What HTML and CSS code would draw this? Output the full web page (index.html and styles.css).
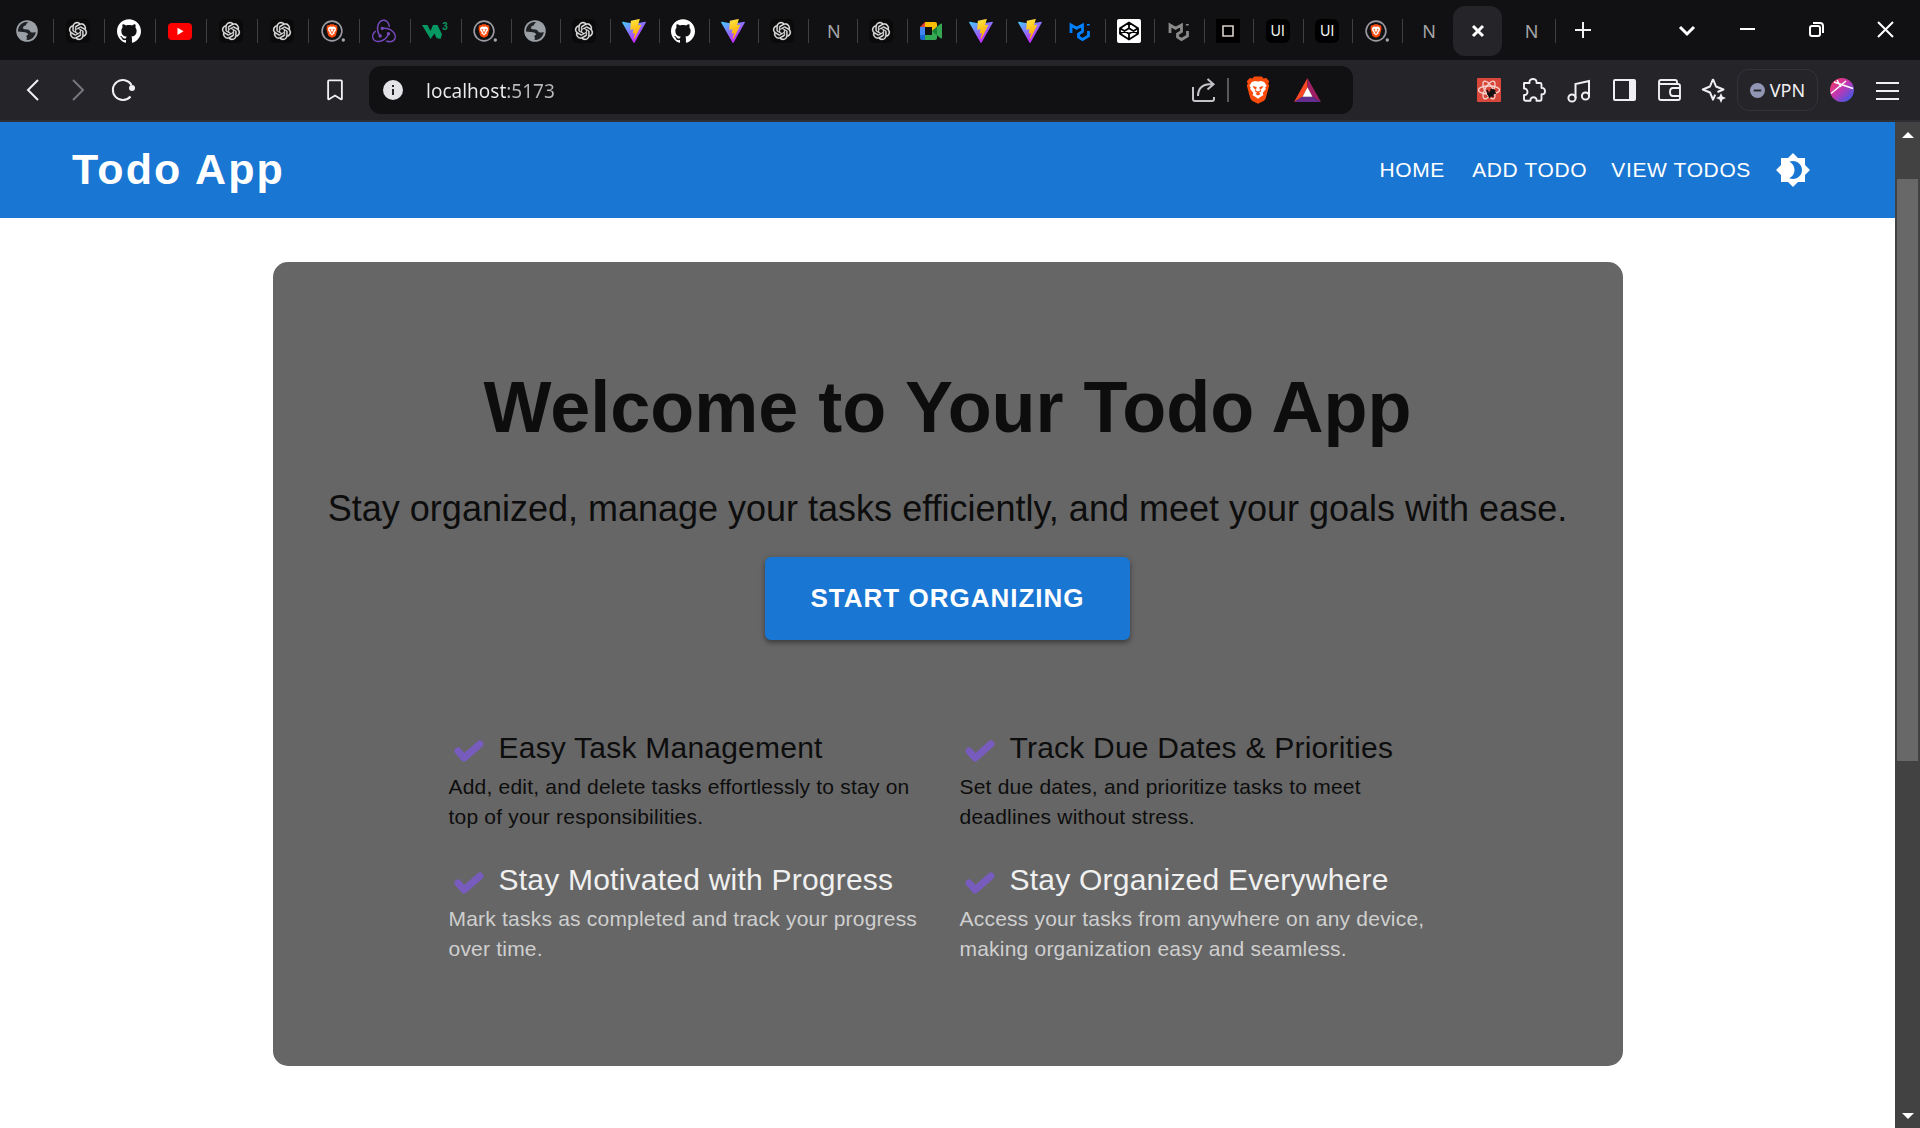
FILE: index.html
```html
<!DOCTYPE html>
<html lang="en">
<head>
<meta charset="utf-8">
<meta name="viewport" content="width=device-width, initial-scale=1">
<title>Todo App</title>
<link rel="stylesheet" href="styles.css">
</head>
<body>
<svg class="sprite" aria-hidden="true">
  <defs>
    <linearGradient id="vite-a" x1="0" y1="0" x2=".6" y2=".8"><stop offset="0" stop-color="#41d1ff"/><stop offset="1" stop-color="#bd34fe"/></linearGradient>
    <linearGradient id="vite-b" x1=".4" y1="0" x2=".6" y2=".9"><stop offset="0" stop-color="#ffea83"/><stop offset=".1" stop-color="#ffdd35"/><stop offset="1" stop-color="#ffa800"/></linearGradient>
    <linearGradient id="orb" x1=".1" y1=".1" x2=".9" y2=".9"><stop offset="0" stop-color="#f0386b"/><stop offset=".45" stop-color="#c436b0"/><stop offset="1" stop-color="#3c5ae8"/></linearGradient>
  </defs>
  <symbol id="i-globe" viewBox="0 0 24 24"><circle cx="12" cy="12" r="10.8" fill="#9aa0a6"/><path d="M13.5 3.2c-1.900 1-2.600 2-2.600 3.300-2.400.3-3.100 1.300-2.700 3.200 1.500.9 3.500.3 5.300 1 1.600.8 1.500 2.600 3.600 2.800 1.300.1 2.500-.6 3.700-.2-.6 3.700-3.500 7-7.300 7.600l-2.200-.1c.9-1.500.9-2.500-.2-3.800l2.200-1.500c-1.200-2-3.300-2.600-5.600-2.500l-4.700-.6c-.1-4.600 3.200-8.500 7.300-9.300z" fill="#202124"/><path d="M14 3.500l-1 3 3.500 1.300 2.500-2-1-1z" fill="#9aa0a6"/></symbol>
  <symbol id="i-gpt" viewBox="0 0 24 24"><rect width="24" height="24" rx="5" fill="#0a0a0b"/><path transform="translate(3 3) scale(.75)" fill="#e8e8e8" stroke="#e8e8e8" stroke-width=".4" d="M22.2819 9.8211a5.9847 5.9847 0 0 0-.5157-4.9108 6.0462 6.0462 0 0 0-6.5098-2.9A6.0651 6.0651 0 0 0 4.9807 4.1818a5.9847 5.9847 0 0 0-3.9977 2.9 6.0462 6.0462 0 0 0 .7427 7.0966 5.98 5.98 0 0 0 .511 4.9107 6.051 6.051 0 0 0 6.5146 2.9001A5.9847 5.9847 0 0 0 13.2599 24a6.0557 6.0557 0 0 0 5.7718-4.2058 5.9894 5.9894 0 0 0 3.9977-2.9001 6.0557 6.0557 0 0 0-.7475-7.0729zm-9.022 12.6081a4.4755 4.4755 0 0 1-2.8764-1.0408l.1419-.0804 4.7783-2.7582a.7948.7948 0 0 0 .3927-.6813v-6.7369l2.02 1.1686a.071.071 0 0 1 .038.052v5.5826a4.504 4.504 0 0 1-4.4945 4.4944zm-9.6607-4.1254a4.4708 4.4708 0 0 1-.5346-3.0137l.142.0852 4.783 2.7582a.7712.7712 0 0 0 .7806 0l5.8428-3.3685v2.3324a.0804.0804 0 0 1-.0332.0615L9.74 19.9502a4.4992 4.4992 0 0 1-6.1408-1.6464zM2.3408 7.8956a4.485 4.485 0 0 1 2.3655-1.9728V11.6a.7664.7664 0 0 0 .3879.6765l5.8144 3.3543-2.0201 1.1685a.0757.0757 0 0 1-.071 0l-4.8303-2.7865A4.504 4.504 0 0 1 2.3408 7.872zm16.5963 3.8558L13.1038 8.364 15.1192 7.2a.0757.0757 0 0 1 .071 0l4.8303 2.7913a4.4944 4.4944 0 0 1-.6765 8.1042v-5.6772a.79.79 0 0 0-.407-.667zm2.0107-3.0231l-.142-.0852-4.7735-2.7818a.7759.7759 0 0 0-.7854 0L9.409 9.2297V6.8974a.0662.0662 0 0 1 .0284-.0615l4.8303-2.7866a4.4992 4.4992 0 0 1 6.6802 4.66zM8.3065 12.863l-2.02-1.1638a.0804.0804 0 0 1-.038-.0567V6.0742a4.4992 4.4992 0 0 1 7.3757-3.4537l-.142.0805L8.704 5.459a.7948.7948 0 0 0-.3927.6813zm1.0976-2.3654l2.602-1.4998 2.6069 1.4998v2.9994l-2.5974 1.4997-2.6067-1.4997Z"/></symbol>
  <symbol id="i-github" viewBox="0 0 24 24"><path fill="#fff" d="M12 .297c-6.63 0-12 5.373-12 12 0 5.303 3.438 9.8 8.205 11.385.6.113.82-.258.82-.577 0-.285-.01-1.04-.015-2.04-3.338.724-4.042-1.61-4.042-1.61C4.422 18.07 3.633 17.7 3.633 17.7c-1.087-.744.084-.729.084-.729 1.205.084 1.838 1.236 1.838 1.236 1.07 1.835 2.809 1.305 3.495.998.108-.776.417-1.305.76-1.605-2.665-.3-5.466-1.332-5.466-5.93 0-1.31.465-2.38 1.235-3.22-.135-.303-.54-1.523.105-3.176 0 0 1.005-.322 3.3 1.23.96-.267 1.98-.399 3-.405 1.02.006 2.04.138 3 .405 2.28-1.552 3.285-1.23 3.285-1.23.645 1.653.24 2.873.12 3.176.765.84 1.23 1.91 1.23 3.22 0 4.61-2.805 5.625-5.475 5.92.42.36.81 1.096.81 2.22 0 1.606-.015 2.896-.015 3.286 0 .315.21.69.825.57C20.565 22.092 24 17.592 24 12.297c0-6.627-5.373-12-12-12"/></symbol>
  <symbol id="i-youtube" viewBox="0 0 24 24"><rect y="4" width="24" height="17" rx="4" fill="#f00"/><path d="M9.500 8.700v7.200l6-3.600z" fill="#fff"/></symbol>
  <symbol id="i-lion" viewBox="0 0 24 28"><path d="M17.500 2.500 15.800.4H8.200L6.500 2.500 3.800 2 .8 5.300l1 2.500-1 1.700 3.300 12.300c.4 1.400 1.200 2.300 2.300 3.100L12 27.700l5.600-2.800c1.100-.8 1.900-1.700 2.300-3.100L23.200 9.500l-1-1.700 1-2.500-3-3.300z" fill="#fb4b0b"/><path d="M12 5.500 9 5 5.800 6 3.400 9.700l1.200 1.600-.4 1.800 3 3.600-.5 2.500 2.600 1.500L12 22.800l2.700-2.100 2.600-1.500-.5-2.500 3-3.600-.4-1.800 1.200-1.600L18.200 6 15 5z" fill="#fff"/><path d="M6.500 10l4.200 1-.8 3.600 2.100.9 2.100-.9-.8-3.600 4.200-1-1.700 2.800-1.300.1.500 2.500-2 1.200 1.500 1.500L12 19.500l-2.500-1.400L11 16.600l-2-1.200.5-2.500-1.300-.1z" fill="#fb4b0b"/></symbol>
  <symbol id="i-brave" viewBox="0 0 24 24"><circle cx="11" cy="12" r="9.900" fill="none" stroke="#9b9ba3" stroke-width="1.600"/><use href="#i-lion" x="5" y="5" width="12" height="14"/><circle cx="22.300" cy="21" r="1.700" fill="#a5a5ad"/></symbol>
  <symbol id="i-redux" viewBox="0 0 24 24"><path fill="#764abc" d="M16.634 16.504c.87-.075 1.543-.84 1.5-1.754-.047-.914-.796-1.648-1.709-1.648h-.061a1.71 1.71 0 00-1.648 1.769c.03.479.226.869.494 1.153-1.048 2.038-2.621 3.535-5.005 4.795-1.603.838-3.296 1.154-4.944.929-1.378-.194-2.456-.81-3.116-1.799-.988-1.499-1.078-3.116-.255-4.734.601-1.166 1.499-2.023 2.099-2.443a9.96 9.96 0 01-.42-1.543C-.868 14.408-.416 18.752.932 20.805c1.004 1.498 3.057 2.456 5.304 2.456.599 0 1.23-.044 1.843-.194 3.897-.749 6.848-3.086 8.541-6.532zm5.348-3.746c-2.32-2.728-5.738-4.226-9.634-4.226h-.51c-.253-.554-.837-.899-1.498-.899h-.045c-.943 0-1.678.81-1.647 1.753.03.898.794 1.648 1.708 1.648h.074a1.69 1.69 0 001.499-1.049h.555c2.309 0 4.495.674 6.488 1.992 1.527 1.005 2.622 2.323 3.237 3.896.538 1.288.509 2.547-.045 3.597-.855 1.647-2.294 2.517-4.196 2.517-1.199 0-2.367-.375-2.967-.644-.36.298-.96.793-1.394 1.093 1.318.598 2.652.943 3.94.943 2.922 0 5.093-1.647 5.918-3.236.898-1.798.824-4.824-1.47-7.416zM6.49 17.042c.03.899.793 1.648 1.708 1.648h.06a1.688 1.688 0 001.648-1.768c0-.9-.779-1.647-1.693-1.647h-.06c-.06 0-.149 0-.226.029-1.243-2.098-1.768-4.347-1.572-6.772.12-1.828.72-3.417 1.797-4.735.899-1.124 2.593-1.68 3.746-1.708 3.236-.061 4.585 3.971 4.689 5.574l1.498.45c-.345-4.914-3.4-7.492-6.322-7.492-2.742 0-5.273 1.993-6.293 4.915-1.398 3.896-.479 7.643 1.229 10.638-.149.195-.239.554-.209.868z"/></symbol>
  <symbol id="i-vite" viewBox="0 0 256 257"><path fill="url(#vite-a)" d="M255.153 37.938L134.897 252.976c-2.483 4.44-8.862 4.466-11.382.048L.875 37.958c-2.746-4.814 1.371-10.646 6.827-9.67l120.385 21.517a6.537 6.537 0 0 0 2.322-.004l117.867-21.483c5.438-.991 9.574 4.796 6.877 9.62Z"/><path fill="url(#vite-b)" d="M185.432.063L96.44 17.501a3.268 3.268 0 0 0-2.634 3.014l-5.474 92.456a3.268 3.268 0 0 0 3.997 3.378l24.777-5.718c2.318-.535 4.413 1.507 3.936 3.838l-7.361 36.047c-.495 2.426 1.782 4.5 4.151 3.78l15.304-4.649c2.372-.72 4.652 1.36 4.15 3.788l-11.698 56.621c-.732 3.542 3.979 5.473 5.943 2.437l1.313-2.028l72.516-144.72c1.215-2.423-.88-5.186-3.54-4.672l-25.505 4.922c-2.396.462-4.435-1.77-3.759-4.114l16.646-57.705c.677-2.35-1.37-4.583-3.769-4.113Z"/></symbol>
  <symbol id="i-meet" viewBox="0 0 24 24"><path d="M1 8l5-5v5z" fill="#ea4335"/><path d="M1 8h5v8H1z" fill="#4285f4"/><path d="M1 16h5v5H3q-2 0-2-2z" fill="#1967d2"/><path d="M6 3h10q2 0 2 2v7l-5 1V8H6z" fill="#fbbc04"/><path d="M6 16h7v-4l5-2v9q0 2-2 2H6z" fill="#34a853"/><path d="M13 12l8.500-7.200q1.500-.8 1.500.7v13q0 1.500-1.500.7z" fill="#34a853"/><path d="M13 12l5-4.300v8.600z" fill="#188038"/></symbol>
  <symbol id="i-mui" viewBox="0 0 24 24"><path d="M3 14V6l5.500 3.300L14.500 6v6.500l-4 2.500v3l4 2.500 6-3.500v-5M20.300 6.500v-1.500" fill="none" stroke="currentColor" stroke-width="2.800"/></symbol>
  <symbol id="i-codepen" viewBox="0 0 24 24"><rect width="24" height="24" rx="2" fill="#fff"/><path d="M12 3.500l9 5.700v5.600l-9 5.700-9-5.700V9.200zM12 3.500v5.700m0 5.600v5.700M3 9.200l9 5.600 9-5.600M3 14.800l9-5.600 9 5.600" fill="none" stroke="#000" stroke-width="1.800" stroke-linejoin="round"/></symbol>
  <symbol id="i-square" viewBox="0 0 24 24"><path d="M0 0h24v24H0z" fill="#000"/><path d="M7 7h10v10H7z" fill="none" stroke="#d6d0c8" stroke-width="1.600"/></symbol>
</svg>

<header class="browser">
  <div class="tabs">
    <div class="tabs-wide">
      <span class="tab"><svg><use href="#i-globe"/></svg></span>
      <span class="tab"><svg><use href="#i-gpt"/></svg></span>
      <span class="tab"><svg><use href="#i-github"/></svg></span>
      <span class="tab"><svg><use href="#i-youtube"/></svg></span>
      <span class="tab"><svg><use href="#i-gpt"/></svg></span>
      <span class="tab"><svg><use href="#i-gpt"/></svg></span>
      <span class="tab"><svg><use href="#i-brave"/></svg></span>
      <span class="tab"><svg><use href="#i-redux"/></svg></span>
      <span class="tab schools"><svg viewBox="0 0 20 24"><path d="M0 6h5.500l3 6 2.500-6h4.500l4.500 9.500-1.500 4.500-4-1-2-4.500-4 5.500z" fill="#059862"/></svg><sup>3</sup></span>
    </div>
    <div class="tabs-narrow">
      <span class="tab"><svg><use href="#i-brave"/></svg></span>
      <span class="tab"><svg><use href="#i-globe"/></svg></span>
      <span class="tab"><svg><use href="#i-gpt"/></svg></span>
      <span class="tab"><svg><use href="#i-vite"/></svg></span>
      <span class="tab"><svg><use href="#i-github"/></svg></span>
      <span class="tab"><svg><use href="#i-vite"/></svg></span>
      <span class="tab"><svg><use href="#i-gpt"/></svg></span>
      <span class="tab tab-letter">N</span>
      <span class="tab"><svg><use href="#i-gpt"/></svg></span>
      <span class="tab"><svg><use href="#i-meet"/></svg></span>
      <span class="tab"><svg><use href="#i-vite"/></svg></span>
      <span class="tab"><svg><use href="#i-vite"/></svg></span>
      <span class="tab mui-blue"><svg><use href="#i-mui"/></svg></span>
      <span class="tab"><svg><use href="#i-codepen"/></svg></span>
      <span class="tab mui-grey"><svg><use href="#i-mui"/></svg></span>
      <span class="tab"><svg><use href="#i-square"/></svg></span>
      <span class="tab"><span class="ui-badge">UI</span></span>
      <span class="tab"><span class="ui-badge">UI</span></span>
      <span class="tab"><svg><use href="#i-brave"/></svg></span>
    </div>
    <span class="tab tab-letter tab-open">N</span>
    <button class="tab-active" aria-label="Close tab"><svg viewBox="0 0 24 24"><path d="M7 7l10 10M17 7L7 17" stroke-width="3"/></svg></button>
    <span class="tab tab-letter tab-last">N</span>
    <button class="new-tab" aria-label="New tab"><svg viewBox="0 0 24 24"><path d="M12 4v16M4 12h16" stroke-width="2"/></svg></button>
    <div class="window-controls">
      <button aria-label="Search tabs"><svg viewBox="0 0 24 24"><path d="M5 9l7 7 7-7" stroke-width="3"/></svg></button>
      <button aria-label="Minimize"><svg viewBox="0 0 24 24"><path d="M4 11h15" stroke-width="2"/></svg></button>
      <button aria-label="Restore"><svg viewBox="0 0 24 24"><rect x="5" y="8" width="10" height="10" rx="2" stroke-width="2"/><path d="M8 5h7q3 0 3 3v7" stroke-width="2"/></svg></button>
      <button aria-label="Close"><svg viewBox="0 0 24 24"><path d="M4 4l15 15M19 4L4 19" stroke-width="2"/></svg></button>
    </div>
  </div>

  <div class="toolbar">
    <div class="toolbar-left">
      <button aria-label="Back"><svg viewBox="0 0 24 24"><path d="M17 2L7 12l10 10" stroke-width="2"/></svg></button>
      <button class="muted" aria-label="Forward"><svg viewBox="0 0 24 24"><path d="M7 2l10 10L7 22" stroke-width="2"/></svg></button>
      <button aria-label="Reload"><svg viewBox="0 0 24 24"><path d="M19.500 18.500A10 10 0 1 1 20.500 7" stroke-width="2"/><circle cx="21" cy="10" r="3" fill="currentColor" stroke="none"/></svg></button>
      <button class="bookmark" aria-label="Bookmark"><svg viewBox="0 0 24 24"><path d="M4.500 2.500q0-1 1-1h13q1 0 1 1v19q0 1-1 .5L12 18l-6.500 4q-1 .5-1-.5z" stroke-width="2"/></svg></button>
    </div>
    <div class="address">
      <svg class="info" viewBox="0 0 20 20"><circle cx="10" cy="10" r="10" fill="#e4e3e8"/><path d="M9 5h2v2H9zM9 9h2v6H9z" fill="#252429"/></svg>
      <input class="url" type="text" aria-label="Address" value="localhost:5173">
      <button class="share" aria-label="Share"><svg viewBox="0 0 24 24"><path d="M2 9v12q0 2 2 2h17q2 0 2-2v-2M7 18q0-12 14-12M16.500 1l6 5.200-6 5.300" stroke-width="2"/></svg></button>
      <span class="divider"></span>
      <button class="shield" aria-label="Brave Shields"><svg class="lion"><use href="#i-lion"/></svg></button>
      <button aria-label="Brave Rewards"><svg class="bat" viewBox="0 0 27 24"><path d="M13.500 0L0 24l8.500-5.200 5-9.500z" fill="#ff4724"/><path d="M13.500 0L27 24l-8.500-5.200-5-9.500z" fill="#9e1f63"/><path d="M0 24h27l-8.500-5.200h-10z" fill="#662d91"/><path d="M13.500 9.300l5 9.500h-10z" fill="#fff"/></svg></button>
    </div>
    <div class="toolbar-right">
      <button aria-label="React extension"><svg viewBox="0 0 24 24"><rect width="24" height="24" rx="1" fill="#d9463a" stroke="none"/><g stroke="#f7d5cf" stroke-width="1.300"><ellipse cx="12" cy="12" rx="10.500" ry="4"/><ellipse cx="12" cy="12" rx="10" ry="4" transform="rotate(60 12 12)"/><ellipse cx="12" cy="12" rx="10" ry="4" transform="rotate(120 12 12)"/></g><path d="M10 12l3 8M14 11l2 8M18 12l-3 6M10 16l9-1" stroke="#111" stroke-width="1.600"/><ellipse cx="14.500" cy="15" rx="2.500" ry="4.500" fill="#111" stroke="none" transform="rotate(35 14.500 15)"/></svg></button>
      <button aria-label="Extensions"><svg viewBox="0 0 24 24"><path d="M2 5h5.500C7 1.800 9.500 1 11 1s4 .8 3.500 4H18q1.500 0 1.500 1.500V10c2.500-.5 3.500 1.500 3.500 3.200s-1 3.600-3.500 3.100V21q0 1.800-1.500 1.800h-3.500c.4-3-1.500-3.500-3-3.500s-3.300.6-3 3.500H4Q2 22.800 2 21v-4c2.500.3 3.500-1.500 3.500-3.300S4 10.200 2 10.500z" stroke-width="1.900" stroke-linejoin="round"/></svg></button>
      <button aria-label="Playlist"><svg viewBox="0 0 24 24"><circle cx="5" cy="20" r="3.600" stroke-width="2"/><circle cx="18.500" cy="18" r="3.600" stroke-width="2"/><path d="M8.500 20V6L22 3v15" stroke-width="2"/></svg></button>
      <button aria-label="Sidebar"><svg viewBox="0 0 24 24"><rect x="2" y="2" width="21" height="20" rx="1" stroke-width="2"/><path d="M17 2h6v20h-6z" fill="currentColor" stroke="none"/></svg></button>
      <button aria-label="Wallet"><svg viewBox="0 0 24 24"><path d="M2 4q0-2 2-2h14q2 0 2 2v2M2 4v16q0 2 2 2h17q2 0 2-2V8q0-2-2-2H4Q2 6 2 4zM23 10h-7q-3 0-3 4t3 4h7" stroke-width="1.900"/></svg></button>
      <button aria-label="Leo AI"><svg viewBox="0 0 24 24"><path d="M11 1l3 7.500 7.500 3-6 2.500M11 1L8 8.500.8 11.500 8 14.500l3 7.200 2.200-5" stroke-width="2" stroke-linejoin="round"/><path d="M19 15l1.500 3.500L24 20l-3.500 1.500L19 25l-1.500-3.500L14 20l3.500-1.500z" fill="currentColor" stroke="none"/></svg></button>
      <button class="vpn"><svg viewBox="0 0 16 16"><circle cx="8" cy="8" r="8" fill="#9096b4" stroke="none"/><path d="M4 8h8" stroke="#252429" stroke-width="2"/></svg>VPN</button>
      <button aria-label="Profile"><svg viewBox="0 0 24 24"><circle cx="12" cy="12" r="12" fill="url(#orb)" stroke="none"/><path d="M4 4l19 6.500M1 15.500L16 3M11 9L7 2" stroke="#fff" stroke-width="1.500"/></svg></button>
      <button aria-label="Menu"><svg viewBox="0 0 24 24"><path d="M1 5h23M1 13h23M1 21h23" stroke-width="2"/></svg></button>
    </div>
  </div>
</header>

<div class="viewport">
  <div class="page">
    <header class="appbar">
      <h2 class="brand">Todo App</h2>
      <nav class="nav">
        <a href="#home">HOME</a>
        <a href="#add">ADD TODO</a>
        <a href="#todos">VIEW TODOS</a>
        <button class="theme" aria-label="Toggle theme"><svg viewBox="0 0 24 24"><path d="M20 8.690V4h-4.690L12 .69 8.690 4H4v4.690L.69 12 4 15.310V20h4.690L12 23.310 15.310 20H20v-4.690L23.310 12 20 8.690zM12 18c-.89 0-1.740-.2-2.500-.55C11.560 16.500 13 14.420 13 12s-1.440-4.500-3.500-5.450C10.260 6.200 11.110 6 12 6c3.310 0 6 2.690 6 6s-2.690 6-6 6z"/></svg></button>
      </nav>
    </header>
    <main class="content">
      <section class="hero">
        <h1>Welcome to Your Todo App</h1>
        <p class="subtitle">Stay organized, manage your tasks efficiently, and meet your goals with ease.</p>
        <button class="cta">START ORGANIZING</button>
        <div class="features">
          <article class="feature">
            <h3><svg viewBox="0 0 30 22"><path d="M4 11l6 7L26 4"/></svg>Easy Task Management</h3>
            <p>Add, edit, and delete tasks effortlessly to stay on top of your responsibilities.</p>
          </article>
          <article class="feature">
            <h3><svg viewBox="0 0 30 22"><path d="M4 11l6 7L26 4"/></svg>Track Due Dates &amp; Priorities</h3>
            <p>Set due dates, and prioritize tasks to meet deadlines without stress.</p>
          </article>
          <article class="feature feature-light">
            <h3><svg viewBox="0 0 30 22"><path d="M4 11l6 7L26 4"/></svg>Stay Motivated with Progress</h3>
            <p>Mark tasks as completed and track your progress over time.</p>
          </article>
          <article class="feature feature-light">
            <h3><svg viewBox="0 0 30 22"><path d="M4 11l6 7L26 4"/></svg>Stay Organized Everywhere</h3>
            <p>Access your tasks from anywhere on any device, making organization easy and seamless.</p>
          </article>
        </div>
      </section>
    </main>
  </div>
  <div class="scrollbar" aria-hidden="true">
    <span class="arrow-up"></span>
    <span class="thumb"></span>
    <span class="track"></span>
    <span class="arrow-down"></span>
  </div>
</div>
</body>
</html>
```
FILE: styles.css
```css
* { box-sizing: border-box; }

body {
  margin: 0;
  min-height: 100vh;
  display: flex;
  flex-direction: column;
  background: #fff;
  font-family: "Liberation Sans", Arial, sans-serif;
}

h1, h2, h3, p { margin: 0; }

button {
  border: 0;
  padding: 0;
  background: none;
  color: inherit;
  font: inherit;
}

.sprite { position: absolute; width: 0; height: 0; }

/* Browser chrome */
.browser {
  color: #f0f0f2;
  font-family: "Noto Sans", sans-serif;
}

.browser button {
  display: flex;
  align-items: center;
  justify-content: center;
}

.browser button svg {
  width: 24px;
  height: 24px;
  fill: none;
  stroke: currentColor;
  overflow: visible;
}

.tabs {
  display: flex;
  align-items: center;
  height: 60px;
  background: #111113;
}

.tabs-wide {
  display: grid;
  grid-template-columns: repeat(9, 51px);
  padding-left: 3px;
}

.tabs-narrow {
  display: grid;
  grid-template-columns: repeat(19, 1fr);
  flex: 0 1 941px;
}

.tab {
  display: flex;
  align-items: center;
  justify-content: center;
  height: 24px;
  margin-top: 2px;
  padding-right: 2px;
  border-right: 1px solid #404043;
}

.tab svg { width: 24px; height: 24px; }

.tab-letter {
  padding-left: 4px;
  font-size: 18px;
  line-height: 24px;
  color: #a4a4a6;
}

.tab-open { width: 50px; border-right: 0; }
.tab-last { width: 54px; padding-left: 8px; }

.schools svg { width: 20px; }

.schools sup {
  align-self: flex-start;
  color: #059862;
  font: 700 10px/16px "Liberation Sans", sans-serif;
}

.mui-blue { color: #007fff; }
.mui-grey { color: #8a8a8a; }

.ui-badge {
  width: 24px;
  height: 24px;
  border-radius: 6px;
  background: #000;
  color: #f2f2f2;
  font: 14px/24px Inter, sans-serif;
  text-align: center;
}

.browser .tab-active {
  width: 49px;
  height: 50px;
  margin-top: 2px;
  border-radius: 12px;
  background: #252429;
  color: #fff;
}

.new-tab { width: 54px; }

.window-controls {
  display: flex;
  margin-left: auto;
  color: #fff;
}

.window-controls button { width: 69px; height: 60px; }
.window-controls button:first-child { width: 52px; }

.toolbar {
  display: flex;
  align-items: center;
  height: 62px;
  background: #252429;
  border-bottom: 2px solid #2f2e33;
}

.toolbar button { width: 45px; height: 48px; flex: none; }

.toolbar-left {
  display: flex;
  width: 369px;
  padding: 0 12px 0 10px;
}

.muted { color: #77767c; }
.toolbar .bookmark { margin-left: auto; }
.toolbar .bookmark svg { width: 22px; height: 22px; }

.address {
  display: flex;
  align-items: center;
  flex: 1;
  height: 48px;
  padding: 0 23px 0 14px;
  border-radius: 12px;
  background: #111113;
}

.info { width: 20px; height: 20px; flex: none; }

.url {
  flex: 1;
  min-width: 0;
  height: 34px;
  margin-left: 23px;
  padding: 2px 0 0;
  border: 0;
  font: 19px/32px "Noto Sans", sans-serif;
  color: transparent;
  background: linear-gradient(90deg, #ececee 80px, #b9b9bc 80px);
  background-clip: text;
  -webkit-background-clip: text;
}

.share { color: #c4c4c8; }

.divider {
  width: 2px;
  height: 24px;
  margin: 0 6px 0 2px;
  background: #59595d;
}

.toolbar .shield { margin-right: 5px; }
.browser button .lion { width: 24px; height: 28px; stroke: none; }
.browser button .bat { width: 27px; height: 24px; stroke: none; }

.toolbar-right {
  display: flex;
  align-items: center;
  justify-content: flex-end;
  width: 567px;
  padding-right: 11px;
}

.toolbar .vpn {
  width: 81px;
  height: 42px;
  margin: 0 1px;
  gap: 5px;
  border: 1px solid #34333a;
  border-radius: 12px;
  font-size: 18px;
}

.browser .vpn svg { width: 15px; height: 15px; }

/* Page viewport */
.viewport {
  display: flex;
  flex: 1;
}

.page { flex: 1; min-width: 0; }

.appbar {
  display: flex;
  align-items: center;
  justify-content: space-between;
  height: 96px;
  padding: 0 72px;
  background: #1976d2;
  color: #fff;
}

.brand {
  padding-bottom: 2px;
  font-size: 43px;
  line-height: 64px;
  letter-spacing: 0.05em;
}

.nav { display: flex; align-items: center; }

.nav a {
  min-width: 96px;
  padding: 0 12px;
  font-size: 21px;
  line-height: 36px;
  letter-spacing: 0.03em;
  text-align: center;
  text-decoration: none;
  color: inherit;
}

.theme { display: flex; padding: 12px; }
.theme svg { width: 36px; height: 36px; fill: #fff; }

.content { padding: 44px 24px; }

.hero {
  display: flex;
  flex-direction: column;
  align-items: center;
  max-width: 1350px;
  margin: 0 auto;
  padding: 102px 48px;
  border-radius: 15px;
  background: #666;
  color: #0d0d0d;
}

.hero h1 {
  margin-bottom: 35px;
  font-size: 72px;
  line-height: 86px;
  text-align: center;
}

.subtitle {
  margin-bottom: 24px;
  font-size: 36px;
  line-height: 48px;
  text-align: center;
}

.cta {
  margin-bottom: 84px;
  padding: 0 45px;
  border-radius: 6px;
  background: #1976d2;
  box-shadow: 0 3px 4px rgba(0, 0, 0, 0.3), 0 1px 7px rgba(0, 0, 0, 0.16);
  color: #fff;
  font-size: 26px;
  font-weight: 700;
  line-height: 83px;
  letter-spacing: 1px;
}

.features {
  display: grid;
  grid-template-columns: 1fr 1fr;
  gap: 24px;
  width: 100%;
  max-width: 998px;
}

.feature h3 {
  display: flex;
  align-items: center;
  gap: 15px;
  padding-left: 5px;
  font-size: 30px;
  font-weight: 400;
  line-height: 48px;
  letter-spacing: 0.0075em;
}

.feature svg {
  width: 30px;
  height: 22px;
  margin-top: 6px;
  fill: none;
  stroke: #775cbe;
  stroke-width: 7;
  stroke-linecap: round;
  stroke-linejoin: round;
}

.feature p {
  font-size: 21px;
  line-height: 30px;
  letter-spacing: 0.01em;
}

.feature-light h3 { color: #f0f0f0; }
.feature-light p { color: #cfcfcf; }

/* Scrollbar */
.scrollbar {
  display: flex;
  flex-direction: column;
  align-items: center;
  width: 25px;
  padding: 10px 0 9px;
  background: #424242;
}

.arrow-up, .arrow-down {
  border: 6px solid transparent;
}

.arrow-up { border-top: 0; border-bottom-color: #fff; margin-bottom: 41px; }
.arrow-down { border-bottom: 0; border-top-color: #fff; }

.thumb {
  flex: 582;
  width: 21px;
  background: #686868;
}

.track { flex: 352; }
```
